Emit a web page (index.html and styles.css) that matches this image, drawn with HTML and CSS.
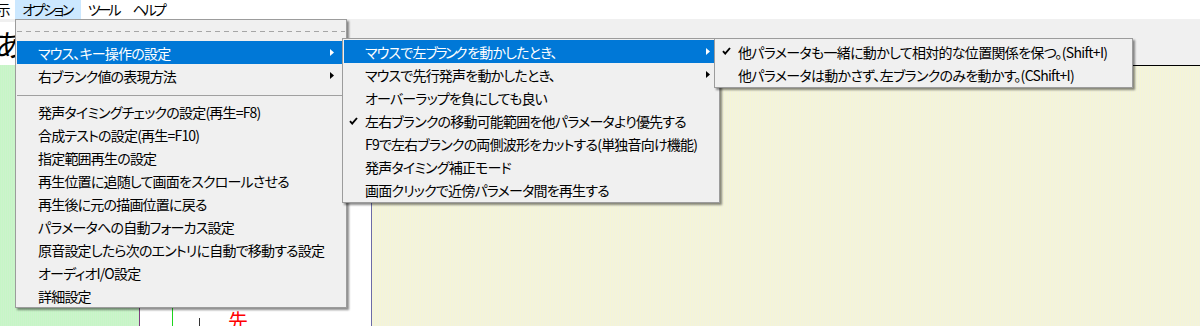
FILE: index.html
```html
<!DOCTYPE html>
<html lang="ja">
<head>
    <meta charset="UTF-8">
    <title>オプション</title>
    <link rel="stylesheet" href="styles.css">
</head>
<body>
    <nav class="menubar">
        <div class="menubar-item cut">表示</div>
        <div class="menubar-item open">オプション</div>
        <div class="menubar-item">ツール</div>
        <div class="menubar-item">ヘルプ</div>
    </nav>

    <div class="toolbar">
        <div class="kana-box">あ</div>
    </div>

    <main class="canvas">
        <div class="track-green"></div>
        <div class="track-line"></div>
        <div class="track-white">
            <div class="lane-head"></div>
            <div class="lane-marker"></div>
            <div class="lane-body">
                <span class="tick"></span>
                <span class="note">先</span>
            </div>
        </div>
        <div class="track-sep"></div>
        <div class="track-yellow"></div>
    </main>

    <!-- オプション メニュー -->
    <div class="menu menu-main">
        <div class="tearoff"><div class="dash"></div></div>
        <div class="item active">
            <span>マウス、キー操作の設定</span>
            <svg class="arrow" width="4" height="7" viewBox="0 0 4 7"><polygon points="0,0 4,3.5 0,7"/></svg>
        </div>
        <div class="item">
            <span>右ブランク値の表現方法</span>
            <svg class="arrow" width="4" height="7" viewBox="0 0 4 7"><polygon points="0,0 4,3.5 0,7"/></svg>
        </div>
        <div class="sep"></div>
        <div class="item"><span>発声タイミングチェックの設定(再生=F8)</span></div>
        <div class="item"><span>合成テストの設定(再生=F10)</span></div>
        <div class="item"><span>指定範囲再生の設定</span></div>
        <div class="item"><span>再生位置に追随して画面をスクロールさせる</span></div>
        <div class="item"><span>再生後に元の描画位置に戻る</span></div>
        <div class="item"><span>パラメータへの自動フォーカス設定</span></div>
        <div class="item"><span>原音設定したら次のエントリに自動で移動する設定</span></div>
        <div class="item"><span>オーディオI/O設定</span></div>
        <div class="item"><span>詳細設定</span></div>
    </div>

    <div class="menu menu-mouse">
        <div class="item active">
            <span>マウスで左<span class="kata">ブランク</span>を動かしたとき、</span>
            <svg class="arrow" width="4" height="7" viewBox="0 0 4 7"><polygon points="0,0 4,3.5 0,7"/></svg>
        </div>
        <div class="item">
            <span>マウスで先行発声を動かしたとき、</span>
            <svg class="arrow" width="4" height="7" viewBox="0 0 4 7"><polygon points="0,0 4,3.5 0,7"/></svg>
        </div>
        <div class="item"><span>オーバーラップを負にしても良い</span></div>
        <div class="item checked">
            <svg class="check" width="9" height="8" viewBox="0 0 9 8"><polyline points="1,4.2 3.2,6.6 8,1"/></svg>
            <span>左右ブランクの移動可能範囲を他パラメータより優先する</span>
        </div>
        <div class="item"><span>F9で左右ブランクの両側波形をカットする(単独音向け機能)</span></div>
        <div class="item"><span>発声タイミング補正モード</span></div>
        <div class="item"><span>画面クリックで近傍パラメータ間を再生する</span></div>
    </div>

    <div class="menu menu-blank">
        <div class="item checked">
            <svg class="check" width="9" height="8" viewBox="0 0 9 8"><polyline points="1,4.2 3.2,6.6 8,1"/></svg>
            <span>他パラメータも一緒に動かして相対的な位置関係を保つ。(Shift+I)</span>
        </div>
        <div class="item"><span>他パラメータは動かさず、左ブランクのみを動かす。(CShift+I)</span></div>
    </div>
</body>
</html>
```

FILE: styles.css
```css
:root {
    --menu-bg: #f0f0f0;
    --menu-border: #9c9c9c;
    --highlight: #0078d7;
    --menubar-open: #cce8ff;
}
* { box-sizing: border-box; margin: 0; padding: 0; }
body {
    width: 1200px; height: 326px; overflow: hidden; position: relative;
    font-family: "Noto Sans CJK JP", "Noto Sans", sans-serif;
    font-size: 14px; color: #000;
    font-feature-settings: "palt" 1;
    background: var(--menu-bg);
}

/* メニューバー */
.menubar { display: flex; height: 19px; background: #fff; }
.menubar-item { padding: 0 7px; line-height: 19px; white-space: nowrap; letter-spacing: -3px; }
.menubar-item.cut { margin-left: -22px; letter-spacing: -2.4px; }
.menubar-item.open { padding-right: 9px; letter-spacing: -2.4px; background: var(--menubar-open); }

.toolbar { height: 46px; padding-top: 3px; background: #f0f0f0; }
.kana-box {
    width: 60px; height: 43px; background: #fff;
    font-size: 30px; line-height: 43px; text-indent: -5px; overflow: hidden;
}

/* 編集画面 */
.canvas { display: flex; height: 261px; }
.track-green {
    width: 139px;
    background: repeating-linear-gradient(90deg, #c6f6c6 0 1px, #ccf3cc 1px 2px);
}
.track-line { width: 1px; background: #7e3f80; }
.track-white { display: flex; width: 231px; background: #fff; border-top: 1px solid #000; }
.lane-head { width: 32px; }
.lane-marker { width: 1px; background: #1ed41e; }
.lane-body { flex: 1; position: relative; }
.tick { position: absolute; left: 26px; top: 252px; width: 1px; height: 9px; background: #333; }
.note {
    position: absolute; left: 55px; top: 243px;
    font-size: 20px; line-height: 24px; color: #f00;
}
.track-sep { width: 1px; background: #6b6ba8; border-top: 1px solid #000; }
.track-yellow {
    flex: 1; border-top: 1px solid #000;
    background: repeating-linear-gradient(90deg, #f5f5d6 0 1px, #f1f2e0 1px 2px);
}

/* ポップアップメニュー */
.menu {
    position: absolute; background: var(--menu-bg);
    border: 1px solid var(--menu-border); padding: 1px;
    box-shadow: 2px 2px 2px rgba(0, 0, 0, 0.45);
}
.menu-main { left: 15px; top: 19px; width: 332px; padding: 0 4px 0 1px; }
.menu-mouse { left: 342px; top: 38px; width: 378px; }
.menu-blank { left: 714px; top: 38px; width: 419px; }

.tearoff { height: 21px; padding-top: 11px; margin-right: -3px; }
.dash {
    height: 1px;
    background: repeating-linear-gradient(90deg, #a6a6a6 0 5px, transparent 5px 9px);
}
.sep { height: 13px; padding-top: 8px; }
.sep::before { content: ""; display: block; height: 1px; background: #a0a0a0; }

.item {
    position: relative; display: flex; align-items: center; justify-content: space-between;
    height: 23px; padding: 0 8px 0 21px; white-space: nowrap; letter-spacing: -0.8px;
}
.item .kata { letter-spacing: -2.5px; margin-right: 2px; }
.item.active { background: var(--highlight); color: #fff; }
.arrow { fill: #000; }
.item.active .arrow { fill: #fff; }
.check { position: absolute; left: 5px; top: 8px; fill: none; stroke: #000; stroke-width: 1.9; }
.menu-blank .item { padding-left: 22px; letter-spacing: -0.7px; }
.menu-blank .check { left: 6px; top: 7px; }
```
